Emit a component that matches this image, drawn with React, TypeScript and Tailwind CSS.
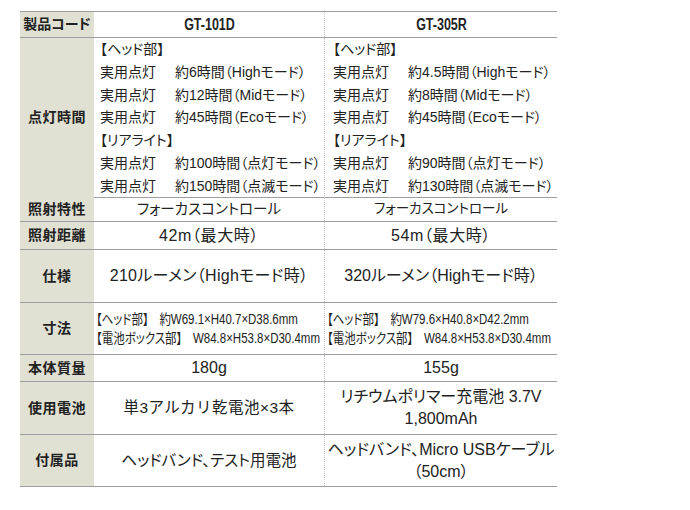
const jp = '"Liberation Sans", "Noto Sans CJK JP", sans-serif';

const rowBase = 'grid grid-cols-[74px_231px_232px] border-b border-[#9e9e9e]';

function Label({ children }: { children: React.ReactNode }) {
  return (
    <div className="flex items-center justify-center bg-[#e0e0d3] text-[14px] font-bold tracking-[0.5px] text-[#222]">
      {children}
    </div>
  );
}

function Cell({ children, className = '', divider = false }: { children: React.ReactNode; className?: string; divider?: boolean }) {
  return (
    <div
      className={`flex flex-col items-center justify-center text-center text-[#222] ${divider ? 'border-r border-dotted border-[#c8c8c8]' : ''} ${className}`}
    >
      {children}
    </div>
  );
}

const times = [
  {
    head: ['約6時間（Highモード）', '約12時間（Midモード）', '約45時間（Ecoモード）'],
    rear: ['約100時間（点灯モード）', '約150時間（点滅モード）'],
  },
  {
    head: ['約4.5時間（Highモード）', '約8時間（Midモード）', '約45時間（Ecoモード）'],
    rear: ['約90時間（点灯モード）', '約130時間（点滅モード）'],
  },
];

function TimeCell({ data, divider }: { data: (typeof times)[number]; divider?: boolean }) {
  return (
    <div
      className={`flex flex-col justify-center text-[14px] leading-[22.8px] text-[#222] ${divider ? 'border-r border-dotted border-[#c8c8c8] pl-[6px]' : 'pl-[8px]'}`}
    >
      <p>【ヘッド部】</p>
      {data.head.map((t) => (
        <p key={t} className="whitespace-nowrap">
          実用点灯<span className="inline-block w-[19px]" />
          {t}
        </p>
      ))}
      <p>【リアライト】</p>
      {data.rear.map((t) => (
        <p key={t} className="whitespace-nowrap">
          実用点灯<span className="inline-block w-[19px]" />
          {t}
        </p>
      ))}
    </div>
  );
}

function Dims({ lines, divider }: { lines: [string, string][]; divider?: boolean }) {
  return (
    <div
      className={`flex flex-col justify-center pl-[2px] text-[14px] leading-[19px] text-[#222] ${divider ? 'border-r border-dotted border-[#c8c8c8]' : ''}`}
    >
      {lines.map(([part, size]) => (
        <p key={part + size} className="origin-left scale-x-[0.82] whitespace-nowrap">
          {part}
          <span className="inline-block w-[13px]" />
          {size}
        </p>
      ))}
    </div>
  );
}

export default function App() {
  return (
    <div
      className="h-[510px] w-[690px] bg-white pl-[20px] pt-[11px] [font-feature-settings:'palt']"
      style={{ fontFamily: jp }}
    >
      <div className="w-[537px] border-t border-[#9e9e9e]">
        <div className={`${rowBase} h-[26px]`}>
          <Label>
            <span className="tracking-[0px]">製品コード</span>
          </Label>
          <Cell divider>
            <span className="inline-block scale-x-[0.78] text-[16px] font-bold">GT-101D</span>
          </Cell>
          <Cell>
            <span className="inline-block scale-x-[0.78] text-[16px] font-bold">GT-305R</span>
          </Cell>
        </div>

        <div className={`${rowBase} h-[160px]`}>
          <Label>点灯時間</Label>
          <TimeCell data={times[0]} divider />
          <TimeCell data={times[1]} />
        </div>

        <div className={`${rowBase} h-[24px]`}>
          <Label>照射特性</Label>
          <Cell divider className="text-[14.5px]">フォーカスコントロール</Cell>
          <Cell className="text-[13.5px]">フォーカスコントロール</Cell>
        </div>

        <div className={`${rowBase} h-[28px]`}>
          <Label>照射距離</Label>
          <Cell divider className="text-[16px] tracking-[0.6px]">42m（最大時）</Cell>
          <Cell className="text-[16px] tracking-[0.6px]">54m（最大時）</Cell>
        </div>

        <div className={`${rowBase} h-[53px]`}>
          <Label>仕様</Label>
          <Cell divider className="text-[16px] tracking-[0.3px]">210ルーメン（Highモード時）</Cell>
          <Cell className="text-[16px]">320ルーメン（Highモード時）</Cell>
        </div>

        <div className={`${rowBase} h-[52px]`}>
          <Label>寸法</Label>
          <Dims
            divider
            lines={[
              ['【ヘッド部】', '約W69.1×H40.7×D38.6mm'],
              ['【電池ボックス部】', 'W84.8×H53.8×D30.4mm'],
            ]}
          />
          <Dims
            lines={[
              ['【ヘッド部】', '約W79.6×H40.8×D42.2mm'],
              ['【電池ボックス部】', 'W84.8×H53.8×D30.4mm'],
            ]}
          />
        </div>

        <div className={`${rowBase} h-[27px]`}>
          <Label>本体質量</Label>
          <Cell divider className="text-[16px]">180g</Cell>
          <Cell className="text-[16px]">155g</Cell>
        </div>

        <div className={`${rowBase} h-[53px]`}>
          <Label>使用電池</Label>
          <Cell divider className="text-[15.5px] tracking-[0.5px] [font-feature-settings:normal]">単3アルカリ乾電池×3本</Cell>
          <Cell className="text-[16px] leading-[22px]">
            <p className="whitespace-nowrap">リチウムポリマー充電池 3.7V</p>
            <p>1,800mAh</p>
          </Cell>
        </div>

        <div className={`${rowBase} h-[52px]`}>
          <Label>付属品</Label>
          <Cell divider className="text-[15.5px]">ヘッドバンド、テスト用電池</Cell>
          <Cell className="text-[16px] leading-[22px]">
            <p className="whitespace-nowrap">ヘッドバンド、Micro USBケーブル</p>
            <p>（50cm）</p>
          </Cell>
        </div>
      </div>
    </div>
  );
}
